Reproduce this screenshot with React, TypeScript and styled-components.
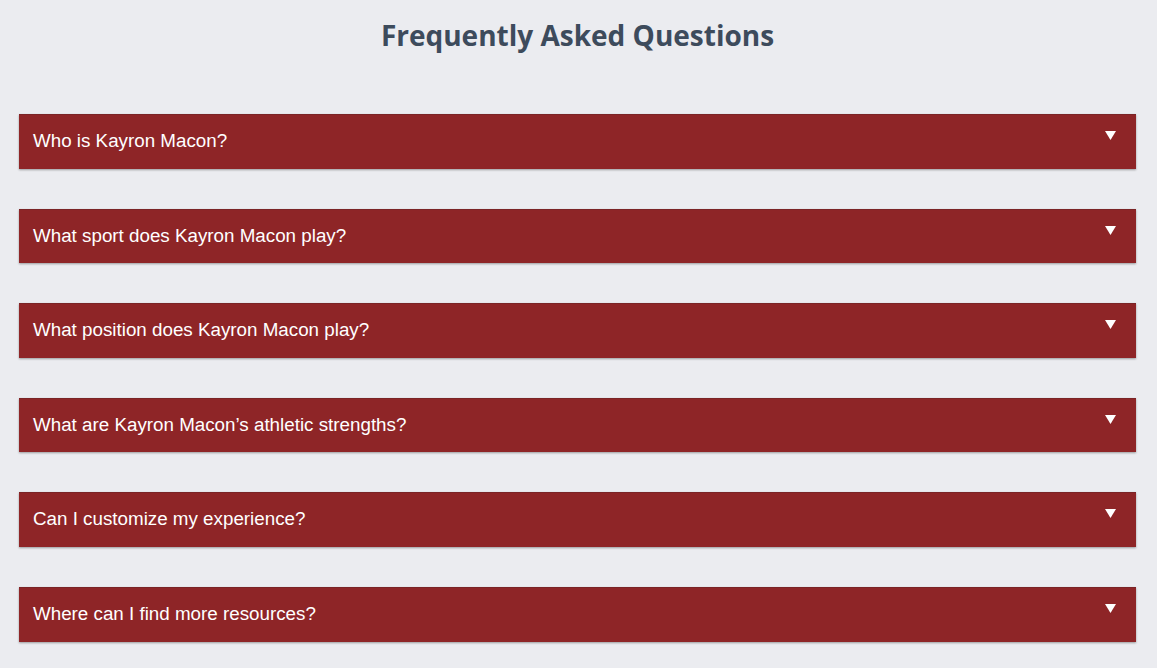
import React from 'react';
import styled, { createGlobalStyle } from 'styled-components';

const GlobalStyle = createGlobalStyle`
  html, body {
    margin: 0;
    padding: 0;
    background: #ebecf0;
  }
`;

const Page = styled.main`
  padding: 15px 21px 20px 19px;
  font-family: 'Liberation Sans', Arial, sans-serif;
`;

const Title = styled.h1`
  margin: 0 0 59px;
  text-align: center;
  font-family: 'Open Sans', sans-serif;
  font-weight: 700;
  font-size: 28px;
  line-height: 40px;
  color: #3d4b5c;
`;

const List = styled.ul`
  list-style: none;
  margin: 0;
  padding: 0;
  display: flex;
  flex-direction: column;
  gap: 40px;
`;

const Question = styled.li`
  display: flex;
  align-items: flex-start;
  justify-content: space-between;
  height: 54.6px;
  box-sizing: border-box;
  padding: 0 20px 0 14px;
  background: #8e2527;
  border-top: 1px solid #7a2426;
  box-shadow: 0 1px 2px rgba(0, 0, 0, 0.35);
  color: #fff;
  cursor: pointer;

  .label {
    font-size: 18.8px;
    line-height: 18px;
    margin-top: 17px;
  }
`;

const Arrow = styled.svg`
  margin-top: 16px;
  flex-shrink: 0;
`;

const questions = [
  'Who is Kayron Macon?',
  'What sport does Kayron Macon play?',
  'What position does Kayron Macon play?',
  'What are Kayron Macon’s athletic strengths?',
  'Can I customize my experience?',
  'Where can I find more resources?',
];

const App = () => (
  <>
    <GlobalStyle />
    <Page>
      <Title>Frequently Asked Questions</Title>
      <List>
        {questions.map((q) => (
          <Question key={q}>
            <span className="label">{q}</span>
            <Arrow width="11" height="9" viewBox="0 0 11 9">
              <polygon points="0,0 11,0 5.5,9" fill="#fff" />
            </Arrow>
          </Question>
        ))}
      </List>
    </Page>
  </>
);

export default App;
